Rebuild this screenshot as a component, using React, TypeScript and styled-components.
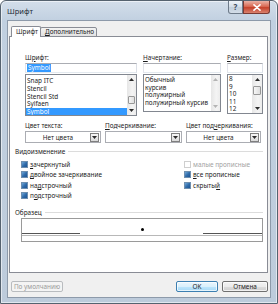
import React from "react";
import styled, { createGlobalStyle } from "styled-components";

const GlobalStyle = createGlobalStyle`
  html, body { margin: 0; padding: 0; background: #ffffff; }
  * { box-sizing: border-box; }
`;

const Window = styled.div`
  width: 278px;
  height: 304px;
  border: 1px solid #55626f;
  border-radius: 6px 6px 0 0;
  background: linear-gradient(180deg, #d3deea 0px, #c1d0e0 20px, #bdcbdb 100%);
  box-shadow: inset 0 0 0 1px rgba(255, 255, 255, 0.55);
  display: flex;
  flex-direction: column;
  padding: 0 6px 5px 6px;
  font-family: "Noto Sans", "Liberation Sans", sans-serif;
  font-size: 6.4px;
  color: #1c1c1c;
`;

const TitleBar = styled.div`
  height: 19px;
  display: flex;
  justify-content: space-between;
  align-items: flex-start;
`;

const Title = styled.div`
  font-size: 7.5px;
  line-height: 20px;
  color: #1e2a36;
`;

const Captions = styled.div`
  display: flex;
  margin-right: 1px;
`;

const CapButton = styled.div<{ $close?: boolean }>`
  width: ${(p) => (p.$close ? 27 : 15)}px;
  height: 13px;
  border: 1px solid ${(p) => (p.$close ? "#7a3a33" : "#6d7a89")};
  border-top: none;
  border-radius: ${(p) => (p.$close ? "0 0 3px 0" : "0 0 0 3px")};
  background: ${(p) =>
    p.$close
      ? "linear-gradient(180deg, #eab2a6 0%, #d96b55 45%, #c5422b 55%, #d9826f 100%)"
      : "linear-gradient(180deg, #eef3f8 0%, #d6e0ea 45%, #c2cfdc 55%, #d3dde8 100%)"};
  display: flex;
  align-items: center;
  justify-content: center;
  font-size: 8px;
  font-weight: bold;
  color: #3b4a5a;
  line-height: 1;
`;

const Client = styled.div`
  flex: 1;
  display: flex;
  flex-direction: column;
  background: #f0f0f0;
  border: 1px solid #8d9aaa;
  padding: 5px 2px 5px 1px;
`;

const TabRow = styled.div`
  display: flex;
  align-items: flex-end;
  padding-left: 2px;
  margin-bottom: -1px;
  position: relative;
  z-index: 1;
`;

const Tab = styled.div<{ $active?: boolean; $w: number }>`
  width: ${(p) => p.$w}px;
  height: ${(p) => (p.$active ? 11 : 10)}px;
  margin-left: ${(p) => (p.$active ? 0 : -1)}px;
  padding-left: 4px;
  border: 1px solid #898c95;
  border-bottom: ${(p) => (p.$active ? "none" : "1px solid #898c95")};
  border-radius: 2px 2px 0 0;
  background: ${(p) => (p.$active ? "#ffffff" : "linear-gradient(180deg, #f3f3f3, #e2e2e2)")};
  line-height: ${(p) => (p.$active ? 10 : 8)}px;
  white-space: nowrap;
`;

const Panel = styled.div`
  flex: 1;
  background: #ffffff;
  border: 1px solid #898c95;
  padding: 15px 4px 0 5px;
  display: flex;
  flex-direction: column;
`;

const FontGrid = styled.div`
  display: grid;
  grid-template-columns: 112px 78px 36px;
  column-gap: 6px;
  margin-left: 10px;
  align-items: start;
`;

const Column = styled.div`
  display: flex;
  flex-direction: column;
`;

const Label = styled.div<{ $h?: number }>`
  height: ${(p) => p.$h ?? 11}px;
  line-height: ${(p) => p.$h ?? 11}px;
  white-space: nowrap;
`;

const U = styled.span`
  text-decoration: underline;
`;

const TextInput = styled.div`
  height: 10px;
  border: 1px solid #abadb3;
  border-color: #abadb3 #dbdfe6 #e3e9ef #e2e3ea;
  background: #ffffff;
  padding: 0 0 0 1px;
  display: flex;
  align-items: center;
`;

const Selected = styled.span`
  background: #3399ff;
  color: #ffffff;
  line-height: 8px;
  padding: 0 1px;
`;

const ListBox = styled.div<{ $h: number }>`
  margin-top: 1px;
  height: ${(p) => p.$h}px;
  border: 1px solid #828790;
  display: flex;
  background: #ffffff;
  overflow: hidden;
`;

const Items = styled.div<{ $pt: number }>`
  flex: 1;
  padding-top: ${(p) => p.$pt}px;
  overflow: hidden;
`;

const Item = styled.div<{ $sel?: boolean; $h: number }>`
  height: ${(p) => p.$h}px;
  line-height: ${(p) => p.$h}px;
  padding-left: 1px;
  white-space: nowrap;
  background: ${(p) => (p.$sel ? "#3399ff" : "transparent")};
  color: ${(p) => (p.$sel ? "#ffffff" : "#1c1c1c")};
`;

const ScrollBar = styled.div<{ $w: number }>`
  width: ${(p) => p.$w}px;
  display: flex;
  flex-direction: column;
  background: linear-gradient(90deg, #e6e6e6, #f4f4f4 60%, #ececec);
`;

const ScrollArrow = styled.div`
  height: 9px;
  display: flex;
  align-items: center;
  justify-content: center;
`;

const Track = styled.div`
  flex: 1;
`;

const Thumb = styled.div<{ $top: number; $h: number }>`
  margin: ${(p) => p.$top}px 1px 0;
  height: ${(p) => p.$h}px;
  border: 1px solid #979797;
  border-radius: 1px;
  background: linear-gradient(90deg, #f6f6f6, #dedede);
`;

const ColorGrid = styled.div`
  display: grid;
  grid-template-columns: 76px 77px 75px;
  column-gap: 4px;
  margin: 5px 0 0 10px;
`;

const Combo = styled.div`
  height: 12px;
  border: 1px solid #abadb3;
  background: #ffffff;
  display: flex;
  align-items: center;
  padding-right: 1px;
`;

const ComboText = styled.div`
  flex: 1;
  text-align: center;
  white-space: nowrap;
`;

const ComboBtn = styled.div`
  width: 9px;
  height: 9px;
  border: 1px solid #7f7f7f;
  background: linear-gradient(180deg, #f7f7f7, #dadada);
  display: flex;
  align-items: center;
  justify-content: center;
`;

const GroupHeader = styled.div<{ $mt: number }>`
  display: flex;
  align-items: center;
  gap: 3px;
  height: 10px;
  margin-top: ${(p) => p.$mt}px;
  white-space: nowrap;
`;

const GroupLine = styled.div`
  flex: 1;
  border-top: 1px solid #dcdcdc;
`;

const EffectsGrid = styled.div`
  display: grid;
  grid-template-columns: 163px auto;
  grid-template-rows: repeat(4, 10.5px);
  grid-auto-flow: column;
  margin: 3px 0 0 6px;
`;

const Check = styled.div<{ $disabled?: boolean }>`
  display: flex;
  align-items: center;
  gap: 2px;
  white-space: nowrap;
  color: ${(p) => (p.$disabled ? "#a2a2a2" : "#1c1c1c")};
`;

const Box = styled.span<{ $disabled?: boolean }>`
  width: 7px;
  height: 7px;
  flex: none;
  border: 1px solid ${(p) => (p.$disabled ? "#cfcfcf" : "#6f8fae")};
  background: ${(p) =>
    p.$disabled ? "#ffffff" : "linear-gradient(135deg, #6fa7d8 0%, #2f6aa8 55%, #1d5595 100%)"};
`;

const SampleBox = styled.div`
  margin: 1px 0 0 6px;
  width: 242px;
  height: 24px;
  border: 1px solid #9a9a9a;
  background: #ffffff;
  display: flex;
  flex-direction: column;
`;

const SampleTop = styled.div`
  height: 14px;
  display: flex;
  justify-content: center;
  padding-top: 9px;
`;

const Dot = styled.span`
  width: 3px;
  height: 3px;
  border-radius: 50%;
  background: #000000;
`;

const Baseline = styled.div`
  display: flex;
  justify-content: space-between;
`;

const Segment = styled.div<{ $w: number }>`
  width: ${(p) => p.$w}px;
  border-top: 1px solid #555555;
`;

const LightLine = styled.div`
  margin-top: 1px;
  border-top: 1px solid #b8b8b8;
`;

const ButtonRow = styled.div`
  display: flex;
  align-items: center;
  gap: 4px;
  padding: 8px 0 0 2px;
`;

const Spacer = styled.div`
  flex: 1;
`;

const Btn = styled.div<{ $w: number; $default?: boolean; $disabled?: boolean }>`
  width: ${(p) => p.$w}px;
  height: 11px;
  border: 1px solid ${(p) => (p.$disabled ? "#b9bcbf" : p.$default ? "#3c7fb1" : "#707070")};
  border-radius: 2px;
  background: ${(p) =>
    p.$disabled
      ? "#f4f4f4"
      : p.$default
      ? "linear-gradient(180deg, #eaf6fd 0%, #d9f0fc 50%, #bee6fd 51%, #a7d9f5 100%)"
      : "linear-gradient(180deg, #f2f2f2 0%, #ebebeb 50%, #dddddd 51%, #cfcfcf 100%)"};
  box-shadow: ${(p) => (p.$disabled ? "none" : "inset 0 0 0 1px rgba(255,255,255,0.7)")};
  color: ${(p) => (p.$disabled ? "#9a9a9a" : "#1c1c1c")};
  display: flex;
  align-items: center;
  justify-content: center;
  line-height: 9px;
  white-space: nowrap;
`;

const Arrow = ({ up, disabled }: { up?: boolean; disabled?: boolean }) => (
  <svg width="5" height="3" viewBox="0 0 5 3">
    <path d={up ? "M0 3 L2.5 0 L5 3 Z" : "M0 0 L5 0 L2.5 3 Z"} fill={disabled ? "#b4b4b4" : "#2a2a2a"} />
  </svg>
);

const CloseX = () => (
  <svg width="8" height="7" viewBox="0 0 8 7">
    <path d="M1 0.8 L7 6.2 M7 0.8 L1 6.2" stroke="#ffffff" strokeWidth="1.6" strokeLinecap="round" />
  </svg>
);

type ListProps = {
  h: number;
  pt: number;
  ih: number;
  items: string[];
  sel?: number;
  sw: number;
  thumb?: { top: number; h: number };
  disabled?: boolean;
};

const List = ({ h, pt, ih, items, sel, sw, thumb, disabled }: ListProps) => (
  <ListBox $h={h}>
    <Items $pt={pt}>
      {items.map((t, i) => (
        <Item key={t} $h={ih} $sel={i === sel}>
          {t}
        </Item>
      ))}
    </Items>
    <ScrollBar $w={sw}>
      <ScrollArrow>
        <Arrow up disabled={disabled} />
      </ScrollArrow>
      <Track>{thumb && <Thumb $top={thumb.top} $h={thumb.h} />}</Track>
      <ScrollArrow>
        <Arrow disabled={disabled} />
      </ScrollArrow>
    </ScrollBar>
  </ListBox>
);

const ComboBox = ({ text }: { text?: string }) => (
  <Combo>
    <ComboText>{text ?? ""}</ComboText>
    <ComboBtn>
      <Arrow />
    </ComboBtn>
  </Combo>
);

export default function App() {
  return (
    <>
      <GlobalStyle />
      <Window>
        <TitleBar>
          <Title>Шрифт</Title>
          <Captions>
            <CapButton>?</CapButton>
            <CapButton $close>
              <CloseX />
            </CapButton>
          </Captions>
        </TitleBar>
        <Client>
          <TabRow>
            <Tab $active $w={30}>
              Шрифт
            </Tab>
            <Tab $w={57}>
              <U>Д</U>ополнительно
            </Tab>
          </TabRow>
          <Panel>
            <FontGrid>
              <Column>
                <Label>
                  Ш<U>р</U>ифт:
                </Label>
                <TextInput>
                  <Selected>Symbol</Selected>
                </TextInput>
                <List
                  h={42}
                  pt={2}
                  ih={7.8}
                  items={["Snap ITC", "Stencil", "Stencil Std", "Sylfaen", "Symbol"]}
                  sel={4}
                  sw={9}
                  thumb={{ top: 12, h: 8 }}
                />
              </Column>
              <Column>
                <Label>
                  <U>Н</U>ачертание:
                </Label>
                <TextInput />
                <List
                  h={38}
                  pt={1}
                  ih={7.6}
                  items={["Обычный", "курсив", "полужирный", "полужирный курсив"]}
                  sw={9}
                  disabled
                />
              </Column>
              <Column>
                <Label>
                  <U>Р</U>азмер:
                </Label>
                <TextInput />
                <List
                  h={40}
                  pt={0}
                  ih={7.6}
                  items={["8", "9", "10", "11", "12"]}
                  sw={10}
                  thumb={{ top: 2, h: 9 }}
                />
              </Column>
            </FontGrid>

            <ColorGrid>
              <Column>
                <Label $h={10}>Цвет текста:</Label>
                <ComboBox text="Нет цвета" />
              </Column>
              <Column>
                <Label $h={10}>
                  <U>П</U>одчеркивание:
                </Label>
                <ComboBox />
              </Column>
              <Column>
                <Label $h={10}>
                  Цвет под<U>ч</U>еркивания:
                </Label>
                <ComboBox text="Нет цвета" />
              </Column>
            </ColorGrid>

            <GroupHeader $mt={3}>
              Видоизменение
              <GroupLine />
            </GroupHeader>
            <EffectsGrid>
              <Check>
                <Box />
                <span>
                  <U>з</U>ачеркнутый
                </span>
              </Check>
              <Check>
                <Box />
                <span>
                  <U>д</U>войное зачеркивание
                </span>
              </Check>
              <Check>
                <Box />
                <span>
                  на<U>д</U>строчный
                </span>
              </Check>
              <Check>
                <Box />
                <span>
                  п<U>о</U>дстрочный
                </span>
              </Check>
              <Check $disabled>
                <Box $disabled />
                <span>малые прописные</span>
              </Check>
              <Check>
                <Box />
                <span>
                  <U>в</U>се прописные
                </span>
              </Check>
              <Check>
                <Box />
                <span>
                  скрыты<U>й</U>
                </span>
              </Check>
            </EffectsGrid>

            <GroupHeader $mt={6}>
              Образец
              <GroupLine />
            </GroupHeader>
            <SampleBox>
              <SampleTop>
                <Dot />
              </SampleTop>
              <Baseline>
                <Segment $w={58} />
                <Segment $w={59} />
              </Baseline>
              <LightLine />
            </SampleBox>
          </Panel>
          <ButtonRow>
            <Btn $w={52} $disabled>
              По умолчанию
            </Btn>
            <Spacer />
            <Btn $w={42} $default>
              OK
            </Btn>
            <Btn $w={46}>Отмена</Btn>
          </ButtonRow>
        </Client>
      </Window>
    </>
  );
}
